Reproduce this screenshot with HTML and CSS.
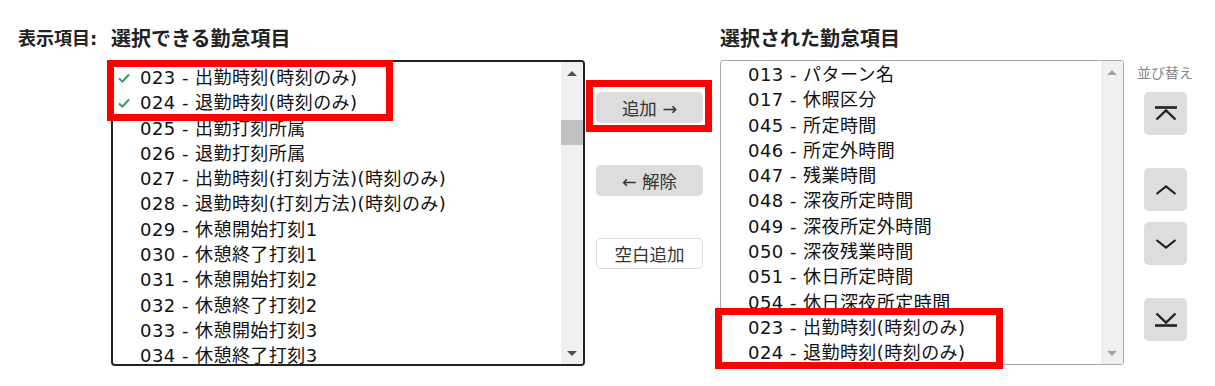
FILE: index.html
```html
<!DOCTYPE html>
<html lang="ja">
<head>
<meta charset="utf-8">
<link rel="stylesheet" href="styles.css">
</head>
<body>
<div class="page">
  <div class="label">表示項目:</div>
  <div class="col-left">
    <div class="heading">選択できる勤怠項目</div>
    <div class="listbox dark">
      <div class="items">
        <div class="item"><span class="check"><svg width="12" height="10" viewBox="0 0 12 10"><polyline points="1,5.5 4.5,8.5 11,1.5" fill="none" stroke="#3a9d5d" stroke-width="2"/></svg></span>023 - 出勤時刻(時刻のみ)</div>
        <div class="item"><span class="check"><svg width="12" height="10" viewBox="0 0 12 10"><polyline points="1,5.5 4.5,8.5 11,1.5" fill="none" stroke="#3a9d5d" stroke-width="2"/></svg></span>024 - 退勤時刻(時刻のみ)</div>
        <div class="item"><span class="check"></span>025 - 出勤打刻所属</div>
        <div class="item"><span class="check"></span>026 - 退勤打刻所属</div>
        <div class="item"><span class="check"></span>027 - 出勤時刻(打刻方法)(時刻のみ)</div>
        <div class="item"><span class="check"></span>028 - 退勤時刻(打刻方法)(時刻のみ)</div>
        <div class="item"><span class="check"></span>029 - 休憩開始打刻1</div>
        <div class="item"><span class="check"></span>030 - 休憩終了打刻1</div>
        <div class="item"><span class="check"></span>031 - 休憩開始打刻2</div>
        <div class="item"><span class="check"></span>032 - 休憩終了打刻2</div>
        <div class="item"><span class="check"></span>033 - 休憩開始打刻3</div>
        <div class="item"><span class="check"></span>034 - 休憩終了打刻3</div>
      </div>
      <div class="sb">
        <div class="sb-btn"><span class="tri up"></span></div>
        <div class="sb-track"><div class="thumb"></div></div>
        <div class="sb-btn"><span class="tri down"></span></div>
      </div>
    </div>
  </div>
  <div class="col-mid">
    <div class="btn">追加 →</div>
    <div class="btn">← 解除</div>
    <div class="btn outline">空白追加</div>
  </div>
  <div class="col-right">
    <div class="heading">選択された勤怠項目</div>
    <div class="listbox light">
      <div class="items">
        <div class="item"><span class="check"></span>013 - パターン名</div>
        <div class="item"><span class="check"></span>017 - 休暇区分</div>
        <div class="item"><span class="check"></span>045 - 所定時間</div>
        <div class="item"><span class="check"></span>046 - 所定外時間</div>
        <div class="item"><span class="check"></span>047 - 残業時間</div>
        <div class="item"><span class="check"></span>048 - 深夜所定時間</div>
        <div class="item"><span class="check"></span>049 - 深夜所定外時間</div>
        <div class="item"><span class="check"></span>050 - 深夜残業時間</div>
        <div class="item"><span class="check"></span>051 - 休日所定時間</div>
        <div class="item"><span class="check"></span>054 - 休日深夜所定時間</div>
        <div class="item"><span class="check"></span>023 - 出勤時刻(時刻のみ)</div>
        <div class="item"><span class="check"></span>024 - 退勤時刻(時刻のみ)</div>
      </div>
      <div class="sb">
        <div class="sb-btn"><span class="tri up"></span></div>
        <div class="sb-track"></div>
        <div class="sb-btn"><span class="tri down"></span></div>
      </div>
    </div>
  </div>
  <div class="col-sort">
    <div class="sort-label">並び替え</div>
    <div class="sbtn first"><svg width="24" height="15" viewBox="0 0 24 15"><line x1="1" y1="1.5" x2="23" y2="1.5" stroke="#222" stroke-width="2.6"/><polyline points="2.5,13.5 12,4.5 21.5,13.5" fill="none" stroke="#222" stroke-width="2.4"/></svg></div>
    <div class="sbtn gap-lg"><svg width="24" height="10" viewBox="0 0 24 10"><polyline points="2.5,9 12,1.5 21.5,9" fill="none" stroke="#222" stroke-width="2.2"/></svg></div>
    <div class="sbtn gap-sm"><svg width="24" height="10" viewBox="0 0 24 10"><polyline points="2.5,1 12,8.5 21.5,1" fill="none" stroke="#222" stroke-width="2.2"/></svg></div>
    <div class="sbtn gap-lg"><svg width="24" height="15" viewBox="0 0 24 15"><polyline points="2.5,1.5 12,10.5 21.5,1.5" fill="none" stroke="#222" stroke-width="2.4"/><line x1="1" y1="13.5" x2="23" y2="13.5" stroke="#222" stroke-width="2.6"/></svg></div>
  </div>
  <div class="mark mark-a"></div>
  <div class="mark mark-b"></div>
  <div class="mark mark-c"></div>
</div>
</body>
</html>
```

FILE: styles.css
```css
html, body {
  margin: 0;
  background: #fff;
}
body {
  font-family: "DejaVu Sans", "Noto Sans CJK JP", sans-serif;
  color: #222;
}
.page {
  position: relative;
  display: flex;
  align-items: flex-start;
  padding: 24px 0 0 18px;
  height: 386px;
  box-sizing: border-box;
}
.label {
  width: 93px;
  flex: none;
  font-size: 18px;
  font-weight: bold;
  line-height: 30px;
  color: #222;
  white-space: nowrap;
}
.col-left {
  width: 474px;
  flex: none;
}
.heading {
  font-size: 20px;
  font-weight: bold;
  line-height: 30px;
  margin-bottom: 6px;
  color: #222;
  white-space: nowrap;
}
.listbox {
  display: flex;
  box-sizing: border-box;
  overflow: hidden;
  background: #fff;
}
.listbox.dark {
  height: 306px;
  border: 2px solid #222;
  border-radius: 4px;
}
.listbox.light {
  height: 305px;
  border: 1px solid #a9a9a9;
  border-radius: 3px;
}
.items {
  flex: 1;
  overflow: hidden;
  font-size: 18px;
  letter-spacing: 0.45px;
  color: #111;
}
.dark .items { padding-top: 3px; }
.light .items { padding-top: 1px; }
.item {
  display: flex;
  align-items: center;
  height: 25.3px;
  line-height: 25.3px;
  white-space: nowrap;
}
.check {
  width: 27px;
  flex: none;
  display: flex;
  align-items: center;
  padding-left: 5px;
  box-sizing: border-box;
}
.sb {
  width: 22px;
  flex: none;
  background: #f0f0f0;
  display: flex;
  flex-direction: column;
}
.sb-btn {
  height: 22px;
  flex: none;
  display: flex;
  align-items: center;
  justify-content: center;
}
.sb-track {
  flex: 1;
}
.thumb {
  margin-top: 36px;
  height: 25px;
  background: #c1c1c1;
}
.tri {
  width: 0;
  height: 0;
  border-left: 5px solid transparent;
  border-right: 5px solid transparent;
}
.tri.up { border-bottom: 5px solid #505050; }
.tri.down { border-top: 5px solid #505050; }
.light .tri.up { border-bottom-color: #a3a3a3; }
.light .tri.down { border-top-color: #a3a3a3; }

.col-mid {
  margin-left: 11px;
  width: 107px;
  flex: none;
  display: flex;
  flex-direction: column;
  gap: 42px;
  padding-top: 68px;
}
.btn {
  height: 31px;
  box-sizing: border-box;
  border-radius: 5px;
  background: #dddddd;
  font-size: 17.5px;
  color: #333;
  display: flex;
  align-items: center;
  justify-content: center;
  white-space: nowrap;
}
.btn.outline {
  background: #fff;
  border: 1px solid #dddddd;
}
.col-right {
  margin-left: 17px;
  width: 404px;
  flex: none;
}
.col-sort {
  margin-left: 13px;
  flex: none;
  display: flex;
  flex-direction: column;
  padding-top: 39px;
}
.sort-label {
  font-size: 14px;
  line-height: 20px;
  color: #888;
  white-space: nowrap;
}
.sbtn {
  margin-left: 7px;
  width: 43px;
  height: 43px;
  border-radius: 5px;
  background: #dddddd;
  display: flex;
  align-items: center;
  justify-content: center;
}
.sbtn.first { margin-top: 9px; }
.sbtn.gap-lg { margin-top: 33px; }
.sbtn.gap-sm { margin-top: 11px; }

.mark {
  position: absolute;
  border: 7px solid #ff0000;
  box-sizing: border-box;
}
.mark-a { left: 107px; top: 60px; width: 286px; height: 61px; }
.mark-b { left: 586px; top: 80px; width: 126px; height: 52px; }
.mark-c { left: 715px; top: 308px; width: 288px; height: 61px; }
```
